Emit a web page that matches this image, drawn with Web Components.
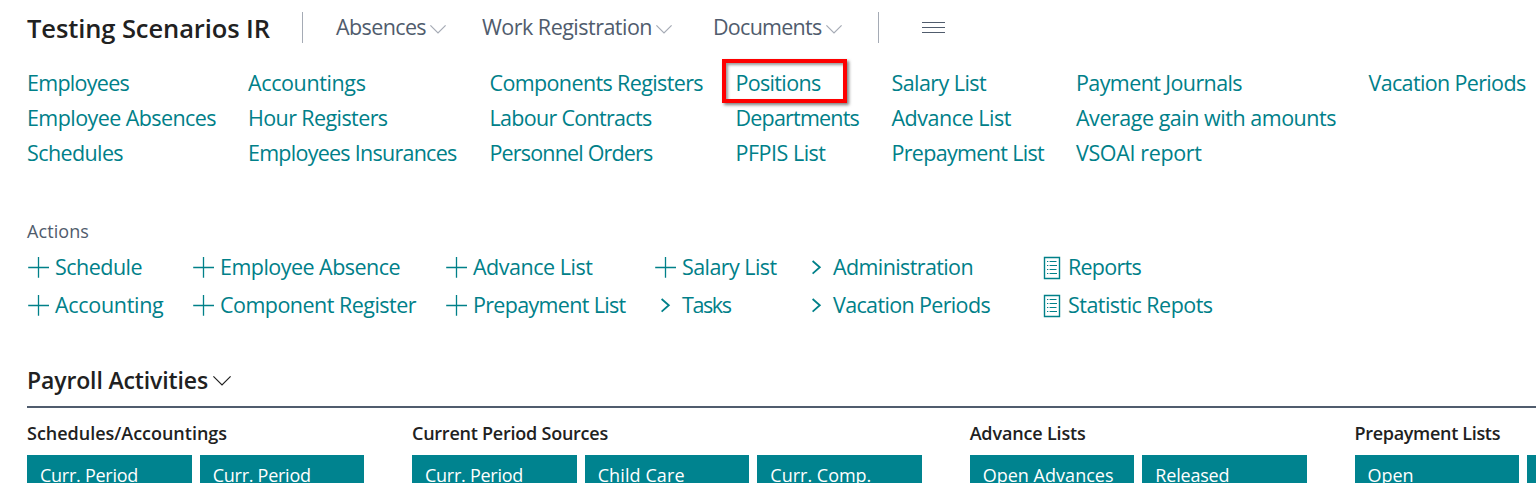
<!DOCTYPE html>
<html lang="en">
<head>
<meta charset="utf-8">
<title>Testing Scenarios IR</title>
<style>
html,body{margin:0;padding:0;background:#fff;overflow:hidden}
body{width:1536px;height:483px;font-family:"Open Sans","Noto Sans",sans-serif;font-weight:370}
</style>
</head>
<body>
<role-center></role-center>
<script>
class Base extends HTMLElement {
  constructor(){ super(); this.attachShadow({mode:'open'}); }
}

/* A single line of text tracked to a given width. */
customElements.define('fit-text', class extends Base {
  connectedCallback(){
    this.shadowRoot.innerHTML = `<style>:host{display:block;white-space:nowrap}span{display:inline-block}</style><span><slot></slot></span>`;
    const s = this.shadowRoot.querySelector('span'), w = +this.getAttribute('w');
    if (w) s.style.letterSpacing = ((w - s.getBoundingClientRect().width) / this.textContent.length).toFixed(3) + 'px';
  }
});

const ICONS = {
  plus:'<path d="M1.2 19.5H22M11.5 9V29.8" stroke-width="1.3"/>',
  arrow:'<path d="M7.6 13L14.8 19.3L7.6 25.6" stroke-width="1.8"/>',
  report:'<path d="M4.5 9.5H19.5V30.5H4.5Z" stroke-width="1.4"/><path d="M7 13.5H8.3M7 17.5H8.3M7 21.5H8.3M7 25.5H8.3M9.6 13.5H16.5M9.6 17.5H17M9.6 21.5H16.5M9.6 25.5H17" stroke-width="1.2"/>'
};

customElements.define('chevron-down', class extends Base {
  connectedCallback(){
    const w = +this.getAttribute('size') || 16;
    this.shadowRoot.innerHTML = `<style>:host{display:block}svg{display:block}</style>
    <svg width="${w}" height="${w/2+1}" viewBox="0 0 ${w} ${w/2+1}" fill="none" stroke="currentColor" stroke-width="1.2"><path d="M.4 .4L${w/2} ${w/2}L${w-.4} .4"/></svg>`;
  }
});

customElements.define('nav-menu', class extends Base {
  connectedCallback(){
    this.shadowRoot.innerHTML = `<style>:host{display:flex;font-size:21.5px;line-height:36px;color:#505c6d}
    chevron-down{color:#a5abb5;margin:16px 0 0 4px}</style>
    <fit-text w="${this.getAttribute('w')}">${this.getAttribute('label')}</fit-text><chevron-down size="16"></chevron-down>`;
  }
});

customElements.define('top-bar', class extends Base {
  connectedCallback(){
    this.shadowRoot.innerHTML = `<style>
    :host{display:flex;height:65px;padding-left:27px;box-sizing:border-box}
    .title{font-size:25.5px;font-weight:600;line-height:36px;color:#212121;width:275px;margin-top:10px}
    .sep{width:1px;height:31px;background:#a5abb5;margin-top:12px}
    nav-menu{margin-top:9px}
    svg{display:block;margin:21px 0 0 43px}</style>
    <fit-text class="title" w="243">Testing Scenarios IR</fit-text><div class="sep"></div>
    <nav-menu style="margin-left:33px;width:146px" label="Absences" w="90"></nav-menu>
    <nav-menu style="width:231px" label="Work Registration" w="170"></nav-menu>
    <nav-menu style="width:165px" label="Documents" w="108.5"></nav-menu>
    <div class="sep"></div>
    <svg width="23" height="13" fill="none" stroke="#505c6d" stroke-width="1"><path d="M0 1.5H23M0 6.5H23M0 11.5H23"/></svg>`;
  }
});

const LINKS = [
  [['Employees',102],['Employee Absences',189],['Schedules',96]],
  [['Accountings',117.5],['Hour Registers',139.5],['Employees Insurances',208.5]],
  [['Components Registers',213.5],['Labour Contracts',162],['Personnel Orders',163]],
  [['Positions',85],['Departments',123.5],['PFPIS List',90]],
  [['Salary List',94.5],['Advance List',119.5],['Prepayment List',152.5]],
  [['Payment Journals',166],['Average gain with amounts',260],['VSOAI report',125.5]],
  [['Vacation Periods',157]]
];
customElements.define('link-grid', class extends Base {
  connectedCallback(){
    this.shadowRoot.innerHTML = `<style>
    :host{display:grid;grid-template-columns:221px 241.5px 246px 156px 184.5px 292.5px 168px;padding-left:27px;height:157px;font-size:21.5px;line-height:35px;color:#008089}
    .col{position:relative}
    .mark{position:absolute;left:-13.5px;top:-6px;width:117px;height:36px;border:4px solid #fe0000;box-shadow:2px 2px 3px rgba(0,0,0,.5),inset 2px 2px 3px rgba(0,0,0,.4)}
    </style>` + LINKS.map((c,i)=>`<div class="col">${c.map(([t,w])=>`<fit-text w="${w}">${t}</fit-text>`).join('')}${i===3?'<div class="mark"></div>':''}</div>`).join('');
  }
});

customElements.define('action-item', class extends Base {
  connectedCallback(){
    this.shadowRoot.innerHTML = `<style>:host{display:flex;height:37.5px;line-height:37.5px}svg{display:block;width:28px;height:37px;flex:none}</style>
    <svg viewBox="0 0 28 37" fill="none" stroke="currentColor">${ICONS[this.getAttribute('icon')]}</svg><fit-text w="${this.getAttribute('w')}">${this.getAttribute('label')}</fit-text>`;
  }
});

const ACTIONS = [
  [['plus','Schedule',87],['plus','Accounting',108.5]],
  [['plus','Employee Absence',180],['plus','Component Register',196]],
  [['plus','Advance List',119.5],['plus','Prepayment List',152.5]],
  [['plus','Salary List',94.5],['arrow','Tasks',48.5]],
  [['arrow','Administration',140],['arrow','Vacation Periods',157]],
  [['report','Reports',73],['report','Statistic Repots',144.5]]
];
customElements.define('action-panel', class extends Base {
  connectedCallback(){
    this.shadowRoot.innerHTML = `<style>
    :host{display:block;padding-left:27px;height:145px}
    .head{font-size:18px;line-height:26px;color:#505c6d;height:30px}
    .grid{display:grid;grid-template-columns:165px 253px 209px 151px 235px 200px;font-size:21.5px;color:#008089}
    </style><fit-text class="head" w="62">Actions</fit-text><div class="grid">` +
    ACTIONS.map(c=>`<div>${c.map(([i,t,w])=>`<action-item icon="${i}" label="${t}" w="${w}"></action-item>`).join('')}</div>`).join('') + '</div>';
  }
});

customElements.define('cue-tile', class extends Base {
  connectedCallback(){
    const label = this.getAttribute('label');
    this.shadowRoot.innerHTML = `<style>:host{display:block;flex:none;width:164.7px;height:160px;box-sizing:border-box;padding:10px 0 0 13px;background:#00838f;color:#fff;font-size:18px;line-height:20px}</style>
    ${label ? `<fit-text w="${this.getAttribute('w')}">${label}</fit-text>` : ''}`;
  }
});

customElements.define('cue-group', class extends Base {
  connectedCallback(){
    this.shadowRoot.innerHTML = `<style>:host{display:block;flex:none}
    .h{font-size:18px;font-weight:600;line-height:26px;height:35px;color:#212121}
    .t{display:flex;gap:8px}</style>
    <fit-text class="h" w="${this.getAttribute('w')}">${this.getAttribute('label')}</fit-text><div class="t"><slot></slot></div>`;
  }
});

customElements.define('payroll-activities', class extends Base {
  connectedCallback(){
    this.shadowRoot.innerHTML = `<style>
    :host{display:block;padding-left:27px;overflow:hidden;height:120px}
    .head{display:flex;height:43px;border-bottom:2px solid #505c6d;font-size:23px;font-weight:600;line-height:34px;color:#212121}
    chevron-down{margin:13px 0 0 5px}
    .groups{display:flex;gap:47.6px;margin-top:12px}
    </style>
    <div class="head"><fit-text w="181">Payroll Activities</fit-text><chevron-down size="18"></chevron-down></div>
    <div class="groups">
      <cue-group label="Schedules/Accountings" w="200"><cue-tile label="Curr. Period" w="98"></cue-tile><cue-tile label="Curr. Period" w="98"></cue-tile></cue-group>
      <cue-group label="Current Period Sources" w="196"><cue-tile label="Curr. Period" w="98"></cue-tile><cue-tile label="Child Care" w="87"></cue-tile><cue-tile label="Curr. Comp." w="101"></cue-tile></cue-group>
      <cue-group label="Advance Lists" w="116"><cue-tile label="Open Advances" w="131"></cue-tile><cue-tile label="Released" w="74"></cue-tile></cue-group>
      <cue-group label="Prepayment Lists" w="145.5"><cue-tile label="Open" w="46"></cue-tile><cue-tile></cue-tile></cue-group>
    </div>`;
  }
});

customElements.define('role-center', class extends Base {
  connectedCallback(){
    this.shadowRoot.innerHTML = `<style>:host{display:block;width:1536px;height:483px;overflow:hidden}action-panel{margin-top:-4px}</style>
    <top-bar></top-bar><link-grid></link-grid><action-panel></action-panel><payroll-activities></payroll-activities>`;
  }
});
</script>
</body>
</html>
